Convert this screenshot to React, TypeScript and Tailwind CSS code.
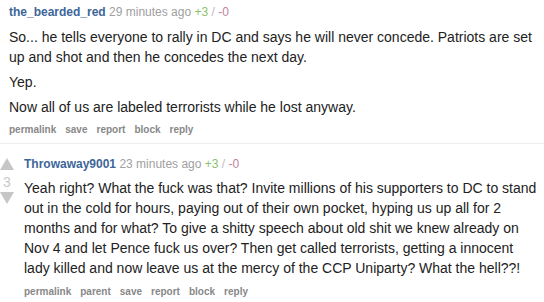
import React from "react";

const font = { fontFamily: '"Liberation Sans", Arial, sans-serif' };

function Actions({ items }: { items: string[] }) {
  return (
    <div className="flex gap-[9px] text-[10px] font-bold leading-[12px] text-[#888]">
      {items.map((t) => (
        <span key={t}>{t}</span>
      ))}
    </div>
  );
}

function Tagline({ user, time }: { user: string; time: string }) {
  return (
    <div className="text-[12px] leading-[16px] whitespace-nowrap">
      <span className="font-bold text-[#3d6699]">{user}</span>{" "}
      <span className="text-[#a0a0a0]">{time}</span>{" "}
      <span className="text-[#8cbf6a]">+3</span>
      <span className="text-[#bbb]"> / </span>
      <span className="text-[#c07fa0]">-0</span>
    </div>
  );
}

export default function App() {
  return (
    <div className="w-[544px] h-[302px] bg-white overflow-hidden text-[#222]" style={font}>
      <div className="pl-[9px] pr-[6px] pt-[4px] pb-[7px]">
        <Tagline user="the_bearded_red" time="29 minutes ago" />
        <div className="mt-[7px] text-[14px] leading-[20px] flex flex-col gap-[5px]">
          <p>
            So... he tells everyone to rally in DC and says he will never concede. Patriots are set up and shot and then he concedes the next day.
          </p>
          <p>Yep.</p>
          <p>Now all of us are labeled terrorists while he lost anyway.</p>
        </div>
        <div className="mt-[7px]">
          <Actions items={["permalink", "save", "report", "block", "reply"]} />
        </div>
      </div>
      <div className="h-px bg-[#eeeeee]" />
      <div className="flex pt-[14px]">
        <div className="w-[24px] flex flex-col items-start shrink-0">
          <div className="w-[14px] flex flex-col items-center">
            <svg width="14" height="12" viewBox="0 0 14 12">
              <polygon points="7,0 14,12 0,12" fill="#c6c6c6" />
            </svg>
            <div className="text-[14px] leading-[16px] text-[#c8c8c8] mt-[4px]">3</div>
            <svg width="14" height="12" viewBox="0 0 14 12" className="mt-[2px]">
              <polygon points="0,0 14,0 7,12" fill="#c6c6c6" />
            </svg>
          </div>
        </div>
        <div className="flex-1 pr-[4px] -mt-[2px]">
          <Tagline user="Throwaway9001" time="23 minutes ago" />
          <div className="mt-[6px] text-[14px] leading-[20px]">
            <p>
              Yeah right? What the fuck was that? Invite millions of his supporters to DC to stand out in the cold for hours, paying out of their own pocket, hyping us up all for 2 months and for what? To give a shitty speech about old shit we knew already on Nov 4 and let Pence fuck us over? Then get called terrorists, getting a innocent lady killed and now leave us at the mercy of the CCP Uniparty? What the hell??!
            </p>
          </div>
          <div className="mt-[8px]">
            <Actions items={["permalink", "parent", "save", "report", "block", "reply"]} />
          </div>
        </div>
      </div>
    </div>
  );
}
